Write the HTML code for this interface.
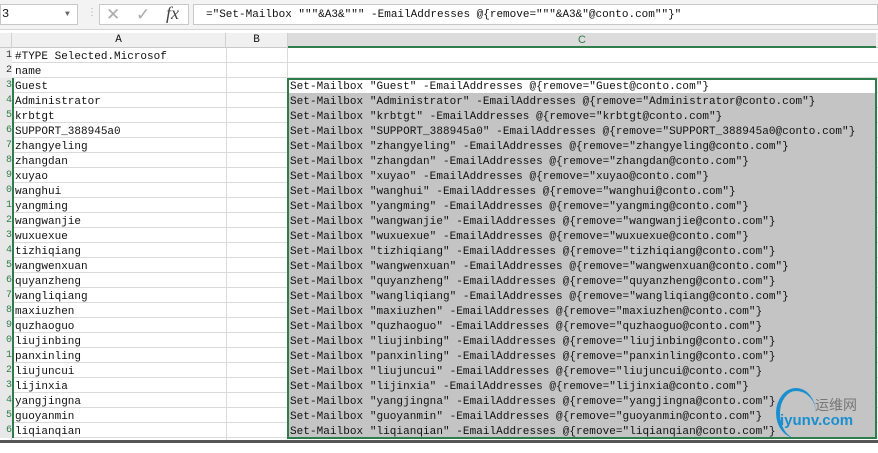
<!DOCTYPE html>
<html><head><meta charset="utf-8"><style>
*{margin:0;padding:0;box-sizing:border-box}
body{width:878px;height:453px;overflow:hidden;background:#fff;position:relative;font-family:"Liberation Mono","Noto Sans CJK SC",monospace;font-size:11px;color:#111}
.a{position:absolute}
.r{position:absolute;left:0;width:878px;height:15px;border-bottom:1px solid #dadada}
.h{position:absolute;left:0;width:12px;height:15px;color:#2e7d4a;font-size:10px;line-height:16px;background:#e8e8e8;overflow:hidden;text-align:right}
.ca{position:absolute;left:15px;line-height:15px;white-space:pre;margin-top:2px}
.cc{position:absolute;left:290px;line-height:15px;white-space:pre;margin-top:2px;letter-spacing:0.05px}
</style></head><body>
<div class="a" style="left:0;top:0;width:878px;height:30px;background:#f3f3f3;border-bottom:1px solid #d4d4d4"></div>
<div class="a" style="left:0;top:4px;width:78px;height:21px;background:#fff;border:1px solid #c8c8c8;line-height:19px;font-size:12px;padding-left:1px">3<span style="position:absolute;left:64px;font-size:8px;color:#666">▼</span></div>
<div class="a" style="left:87px;top:7px;color:#aaa;font-size:10px">⋮</div>
<div class="a" style="left:99px;top:4px;width:90px;height:21px;background:#fff;border:1px solid #c8c8c8"></div>
<div class="a" style="left:106px;top:5px;color:#aaa;font-size:17px;font-family:'Liberation Sans',sans-serif">✕</div>
<div class="a" style="left:136px;top:5px;color:#aaa;font-size:17px;font-family:'Liberation Sans',sans-serif">✓</div>
<div class="a" style="left:166px;top:3px;color:#444;font-size:18px;font-style:italic;font-family:'Liberation Serif',serif">fx</div>
<div class="a" style="left:193px;top:4px;width:685px;height:21px;background:#fff;border:1px solid #c8c8c8;line-height:20px;padding-left:12px;white-space:pre">="Set-Mailbox """&amp;A3&amp;""" -EmailAddresses @{remove="""&amp;A3&amp;"@conto.com""}"</div>
<div class="a" style="left:0;top:33px;width:878px;height:15px;background:#f0f0f0;border-bottom:1px solid #c8c8c8"></div>
<div class="a" style="left:11px;top:33px;width:1px;height:408px;background:#d0d0d0"></div>
<div class="a" style="left:12px;top:33px;width:214px;height:15px;text-align:center;line-height:15px;border-right:1px solid #d0d0d0;font-size:11px">A</div>
<div class="a" style="left:226px;top:33px;width:62px;height:15px;text-align:center;line-height:15px;border-right:1px solid #d0d0d0;font-size:11px">B</div>
<div class="a" style="left:288px;top:33px;width:588px;height:15px;text-align:center;line-height:15px;background:#dcdcdc;color:#2e7d4a;font-family:'Liberation Sans',sans-serif;border-bottom:2px solid #2e7d4a">C</div>
<div id="g"></div>
<div class="a" style="left:226px;top:48px;width:1px;height:393px;background:#dadada"></div>
<div class="a" style="left:287px;top:48px;width:1px;height:30px;background:#dadada"></div>
<div class="a" style="left:288px;top:93px;width:588px;height:345px;background:#c4c4c4"></div>
<div class="a" style="left:12px;top:78px;width:2px;height:360px;background:#2e7d4a"></div>
<script>
var names=["Guest","Administrator","krbtgt","SUPPORT_388945a0","zhangyeling","zhangdan","xuyao","wanghui","yangming","wangwanjie","wuxuexue","tizhiqiang","wangwenxuan","quyanzheng","wangliqiang","maxiuzhen","quzhaoguo","liujinbing","panxinling","liujuncui","lijinxia","yangjingna","guoyanmin","liqianqian"];
var h="";
var rows=[["#TYPE Selected.Microsof",""],["name",""]];
names.forEach(function(n){rows.push([n,'Set-Mailbox "'+n+'" -EmailAddresses @{remove="'+n+'@conto.com"}'])});
rows.forEach(function(r,i){var t=48+i*15;
h+='<div class="r" style="top:'+t+'px"></div>';
h+='<div class="h" style="top:'+t+'px;'+(i>=2?'color:#2e7d4a':'color:#333;background:#f0f0f0')+'">'+(i+1)%10+'</div>';
h+='<div class="ca" style="top:'+t+'px">'+r[0]+'</div>';
if(r[1])h+='<div class="cc" style="top:'+t+'px;z-index:2">'+r[1].replace(/&/g,"&amp;")+'</div>';});
document.getElementById("g").innerHTML=h;
</script>
<div class="a" style="left:287px;top:78px;width:590px;height:361px;border:2px solid #2e7d4a;z-index:3"></div>
<div class="a" style="left:288px;top:80px;width:587px;height:13px;background:#fff;z-index:1"></div>
<div class="a" style="left:0;top:440px;width:878px;height:13px;background:#fff;border-top:3px solid #555;z-index:4"></div>
<div class="a" style="left:780px;top:412px;color:#1a8fd0;font:bold 15px 'Liberation Sans',sans-serif;z-index:5">iyunv.com</div>
<div class="a" style="left:815px;top:395px;color:#777;font:14px 'Noto Sans CJK SC',sans-serif;z-index:5">运维网</div>
<div class="a" style="left:776px;top:388px;width:40px;height:50px;border-left:4px solid #1a8fd0;border-top:3px solid #1a8fd0;border-radius:50%;z-index:5"></div>
</body></html>
